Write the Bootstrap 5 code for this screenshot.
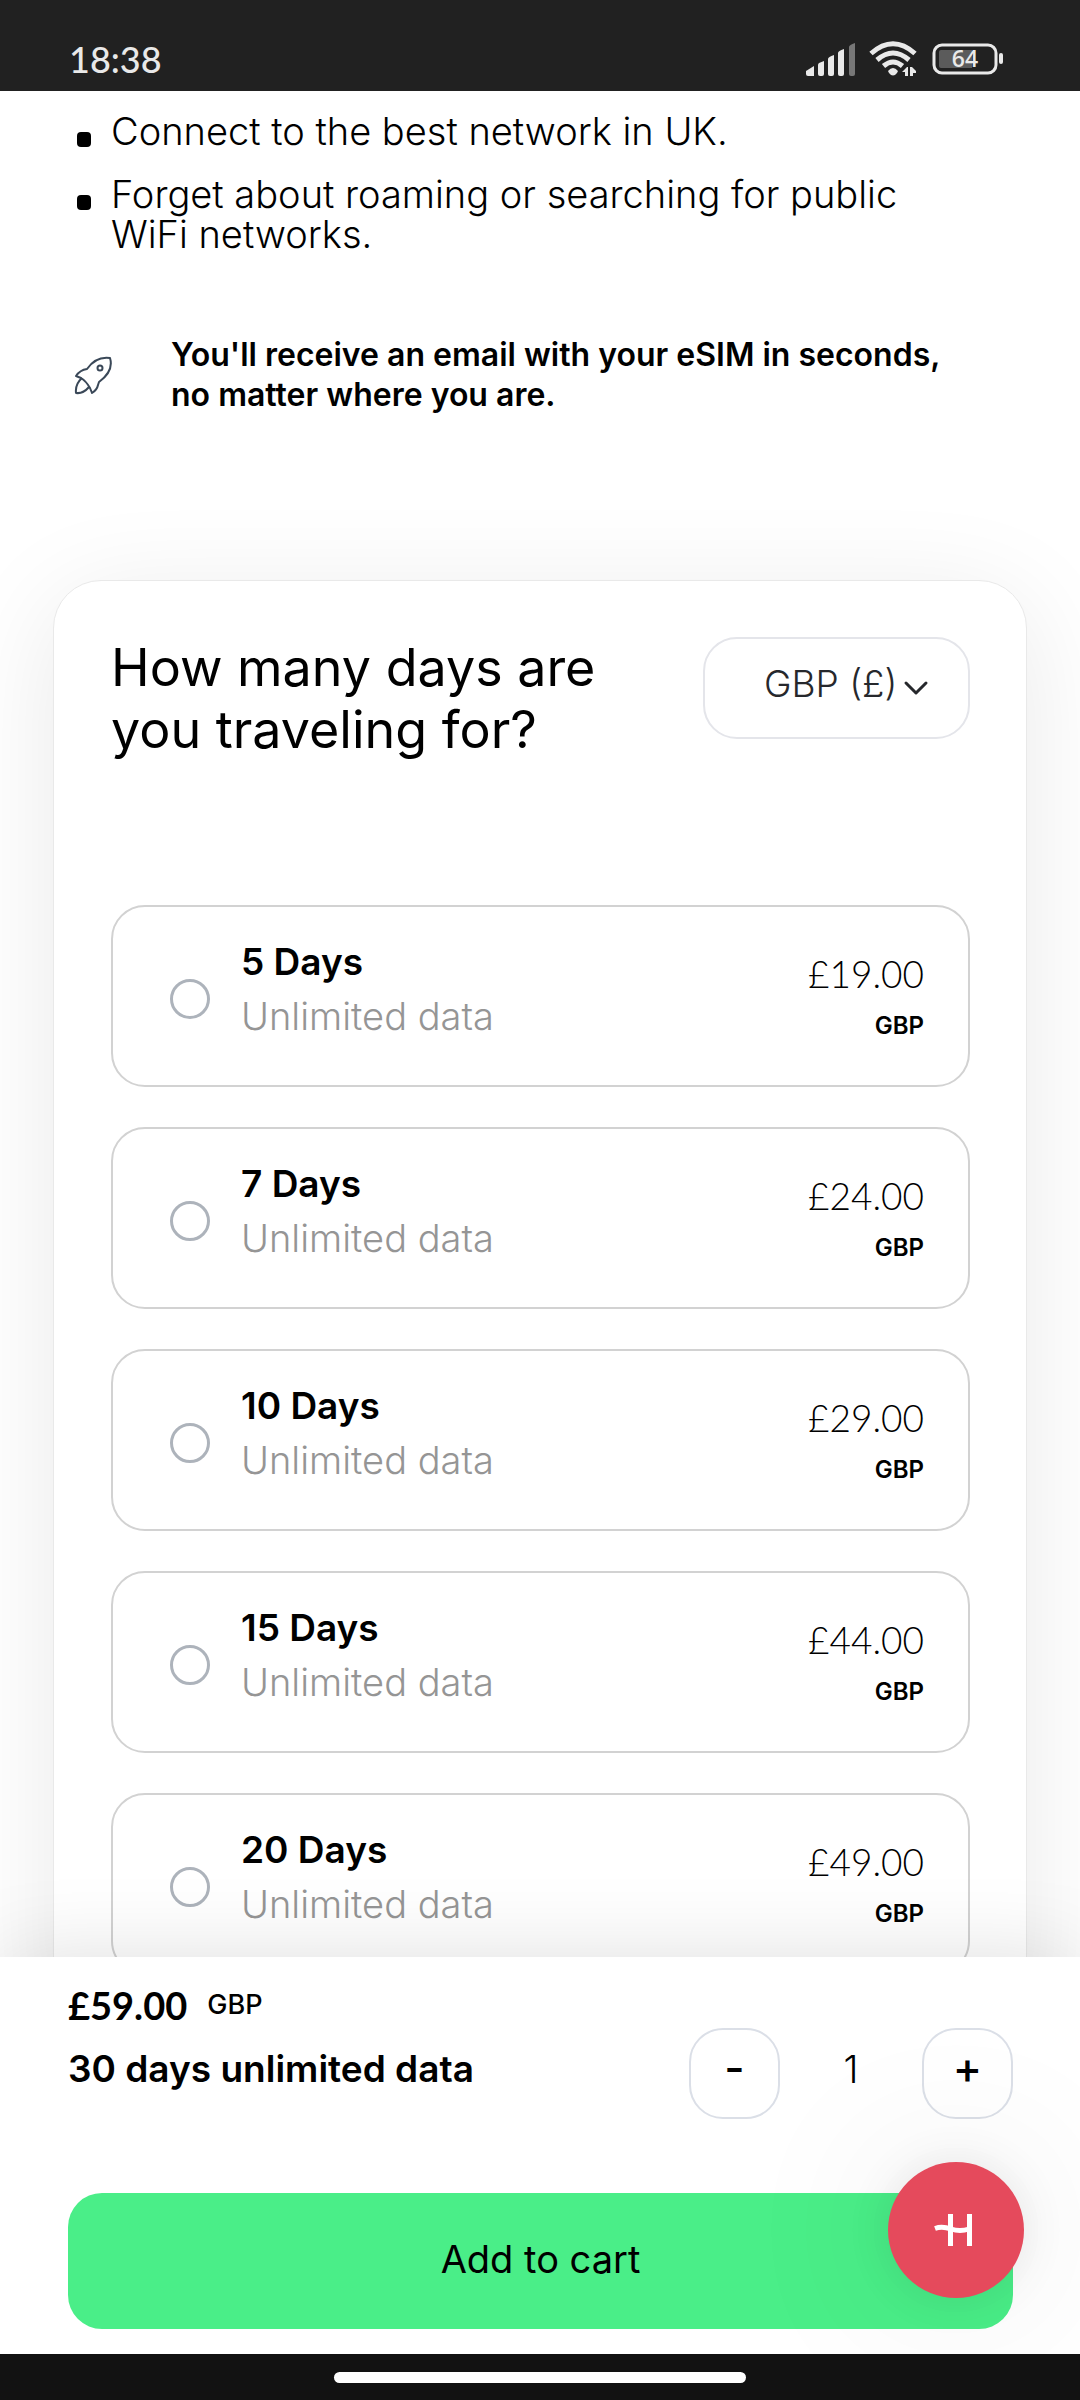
<!DOCTYPE html>
<html lang="en">
<head>
<meta charset="utf-8">
<meta name="viewport" content="width=device-width, initial-scale=1">
<title>eSIM UK – choose your plan</title>
<link href="https://cdn.jsdelivr.net/npm/bootstrap@5.3.0/dist/css/bootstrap.min.css" rel="stylesheet">
<style>
  body { font-family: Inter, Lato, sans-serif; font-size: 38px; line-height: 40px; color: #000; background: #fff; }
  .status-bar { background: #212121; color: #e9e9e9; height: 91px; padding: 27px 75px 0 69px; font-family: Lato, sans-serif; font-size: 36px; font-weight: 500; line-height: 64px; }
  .status-icons { gap: 13px; height: 64px; }
  .scroll-area { min-height: 0; overflow-y: auto; scrollbar-width: none; }
  .scroll-area::-webkit-scrollbar { display: none; }
  .feature-list { padding: 20px 68px 0 77px; gap: 23px; }
  .feature-list li { display: flex; gap: 20px; }
  .feature-list li::before { content: ""; flex: none; width: 14px; height: 15px; margin-top: 21px; border-radius: 4px; background: #000; }
  .notice { padding: 81px 68px 0 74px; gap: 57px; font-size: 32px; font-weight: 600; }
  .plan-card { margin: 165px 53px 60px 53px; padding: 56px 56px 56px 57px; border: 1px solid #e9e9e9; border-radius: 48px; background: #fff; box-shadow: 0 20px 110px rgba(0,0,0,.09); }
  .plan-title { font-size: 52px; line-height: 62px; font-weight: 400; width: 520px; }
  .plan-head { margin-bottom: 144px; }
  .currency-select { width: 267px; height: 102px; padding: 0 0 8px 59px; border: 2px solid #e4e5ea; border-radius: 34px; background: #fff; font-size: 37px; font-weight: 300; color: #26282c; }
  .currency-chevron { position: absolute; right: 41px; top: 42px; pointer-events: none; }
  .plan-list { gap: 40px; }
  .plan-option { height: 182px; padding: 0 44px 0 57px; border: 2px solid #d2d2d2; border-radius: 34px; cursor: pointer; }
  .plan-option .form-check-input { width: 40px; height: 40px; margin: 6px 31px 0 0; border: 3px solid #adb3bb; flex: none; }
  .plan-days { font-size: 37px; font-weight: 600; line-height: 54px; }
  .plan-data { color: #959595; font-weight: 300; line-height: 54px; }
  .plan-text { margin-bottom: 14px; }
  .plan-cost { margin-top: 8px; }
  .plan-price { font-family: Lato, sans-serif; font-size: 37px; font-weight: 300; line-height: 52px; }
  .plan-cur { font-size: 24px; font-weight: 600; line-height: 52px; }
  .light-text { font-weight: 300; }
  .cart-bar { position: relative; z-index: 2; padding: 16px 67px 25px 68px; background: #fff; box-shadow: 0 0 80px rgba(0,0,0,.13); }
  .cart-price { font-family: Lato, sans-serif; font-weight: 700; line-height: 64px; gap: 20px; }
  .cart-price small { font-family: Inter, sans-serif; font-size: 27px; font-weight: 500; line-height: 64px; }
  .cart-head { margin-bottom: 74px; }
  .cart-plan { font-size: 37px; font-weight: 600; line-height: 64px; }
  .qty-btn { width: 91px; height: 91px; padding: 0 0 11px; border: 2px solid #dbdfe7; border-radius: 34px; font-size: 44px; line-height: 44px; font-weight: 500; color: #000; }
  .qty-box { margin-top: 55px; }
  .qty-value { width: 142px; border: 0; padding: 0 0 10px; text-align: center; background: transparent; color: #000; font-weight: 300; }
  .add-btn { height: 136px; padding: 0 0 3px; border: 0; border-radius: 34px; background: #4aee88; color: #000; font-size: 38px; }
  .chat-btn { position: absolute; right: 56px; bottom: 56px; width: 136px; height: 136px; border: 0; border-radius: 50%; background: #e54a5c; box-shadow: 0 0 40px rgba(0,0,0,.08), 0 0 170px rgba(0,0,0,.1); }
  .nav-strip { position: relative; z-index: 3; height: 46px; padding-top: 18px; background: #121212; }
  .nav-pill { width: 412px; height: 11px; border-radius: 6px; background: #fff; }
</style>
</head>
<body class="vh-100 d-flex flex-column overflow-hidden">
<header class="status-bar d-flex justify-content-between flex-shrink-0">
  <span>18:38</span>
  <div class="status-icons d-flex align-items-center">
    <svg width="50" height="33" viewBox="0 0 50 33" fill="#e9e9e9"><path d="M0 28l8-5v10H2q-2 0-2-2z"/><path d="M12 22q0-1 1-2l5-2v13q0 2-2 2h-2q-2 0-2-2z"/><path d="M22 16q0-2 6-4v19q0 2-2 2h-2q-2 0-2-2z"/><path d="M32 10q0-2 6-4v25q0 2-2 2h-2q-2 0-2-2z"/><path fill="#777" d="M43 4q0-2 6-4v31q0 2-2 2h-2q-2 0-2-2z"/></svg>
    <svg width="50" height="36" viewBox="0 0 50 36" fill="none" stroke="#e9e9e9" stroke-width="5"><path d="M2 12.500Q24-7 46 12.500"/><path d="M8 19Q24 5 40 19"/><path d="M14.500 25Q24 17 33.500 25"/><path fill="#e9e9e9" stroke="none" d="M19 30q5-6 10 0l-1 2q-4 5-8 0zM33 31l5-5h1v9h-3v-4zM41 35v-9h2l4 4v2h-3v3z"/></svg>
    <svg width="73" height="32" viewBox="0 0 73 32"><rect x="2" y="2" width="62" height="28" rx="8" fill="none" stroke="#e9e9e9" stroke-width="3"/><path fill="#5b5b5b" d="M9 7h31v18H9q-2 0-2-2V9q0-2 2-2z"/><rect x="67" y="10" width="4" height="11" rx="2" fill="#e9e9e9"/><text x="33" y="24" text-anchor="middle" font-family="Open Sans" font-size="23" font-weight="600" fill="#e9e9e9">64</text></svg>
  </div>
</header>

<main class="scroll-area flex-grow-1">
  <ul class="feature-list list-unstyled d-flex flex-column mb-0 light-text">
    <li>Connect to the best network in UK.</li>
    <li>Forget about roaming or searching for public<br>WiFi networks.</li>
  </ul>
  <div class="notice d-flex align-items-center">
    <svg class="flex-shrink-0" width="40" height="40" viewBox="0 0 40 40" fill="none" stroke="#3a4858" stroke-width="2" stroke-linejoin="round"><path d="M13 14Q22 1 36 3Q40 16 25 27L24 30Q23 35 18 38L16 33Q12 26 7 23L2 21Q6 15 13 14Z"/><circle cx="26" cy="13" r="2.500"/><path d="M8 23Q1 29 2 38Q9 39 15 32"/></svg>
    <p class="mb-0">You'll receive an email with your eSIM in seconds,<br>no matter where you are.</p>
  </div>

  <section class="plan-card">
    <div class="plan-head d-flex justify-content-between">
      <h1 class="plan-title mb-0">How many days are you traveling for?</h1>
      <div class="position-relative">
        <select class="currency-select form-select" aria-label="Currency"><option>GBP (£)</option></select>
        <svg class="currency-chevron" width="26" height="18" viewBox="0 0 26 18" fill="none" stroke="#26282c" stroke-width="3" stroke-linecap="round" stroke-linejoin="round"><path d="M3 4l10 10L23 4"/></svg>
      </div>
    </div>
    <div class="plan-list d-flex flex-column">
      <label class="plan-option d-flex align-items-center"><input class="form-check-input" type="radio" name="plan"><span class="plan-text d-flex flex-column flex-grow-1"><span class="plan-days">5 Days</span><span class="plan-data">Unlimited data</span></span><span class="plan-cost d-flex flex-column text-end"><span class="plan-price">£19.00</span><span class="plan-cur">GBP</span></span></label>
      <label class="plan-option d-flex align-items-center"><input class="form-check-input" type="radio" name="plan"><span class="plan-text d-flex flex-column flex-grow-1"><span class="plan-days">7 Days</span><span class="plan-data">Unlimited data</span></span><span class="plan-cost d-flex flex-column text-end"><span class="plan-price">£24.00</span><span class="plan-cur">GBP</span></span></label>
      <label class="plan-option d-flex align-items-center"><input class="form-check-input" type="radio" name="plan"><span class="plan-text d-flex flex-column flex-grow-1"><span class="plan-days">10 Days</span><span class="plan-data">Unlimited data</span></span><span class="plan-cost d-flex flex-column text-end"><span class="plan-price">£29.00</span><span class="plan-cur">GBP</span></span></label>
      <label class="plan-option d-flex align-items-center"><input class="form-check-input" type="radio" name="plan"><span class="plan-text d-flex flex-column flex-grow-1"><span class="plan-days">15 Days</span><span class="plan-data">Unlimited data</span></span><span class="plan-cost d-flex flex-column text-end"><span class="plan-price">£44.00</span><span class="plan-cur">GBP</span></span></label>
      <label class="plan-option d-flex align-items-center"><input class="form-check-input" type="radio" name="plan"><span class="plan-text d-flex flex-column flex-grow-1"><span class="plan-days">20 Days</span><span class="plan-data">Unlimited data</span></span><span class="plan-cost d-flex flex-column text-end"><span class="plan-price">£49.00</span><span class="plan-cur">GBP</span></span></label>
    </div>
  </section>
</main>

<section class="cart-bar flex-shrink-0">
  <div class="cart-head d-flex justify-content-between">
    <div>
      <div class="cart-price d-flex"><span>£59.00</span><small>GBP</small></div>
      <div class="cart-plan">30 days unlimited data</div>
    </div>
    <div class="qty-box d-flex align-items-center">
      <button class="qty-btn btn" type="button" aria-label="Decrease quantity">-</button>
      <input class="qty-value" type="text" inputmode="numeric" value="1" aria-label="Quantity">
      <button class="qty-btn btn" type="button" aria-label="Increase quantity">+</button>
    </div>
  </div>
  <button class="add-btn btn w-100" type="button">Add to cart</button>
  <button class="chat-btn d-flex align-items-center justify-content-center" type="button" aria-label="Chat">
    <svg width="44" height="34" viewBox="0 0 44 34" fill="none" stroke="#fff" stroke-width="5"><path d="M16.500 1v32M35.500 1v32"/><path d="M1 15.500Q8 13 17 16T35 16"/></svg>
  </button>
</section>
<footer class="nav-strip flex-shrink-0"><div class="nav-pill mx-auto"></div></footer>
<script src="https://cdn.jsdelivr.net/npm/bootstrap@5.3.0/dist/js/bootstrap.bundle.min.js"></script>
</body>
</html>
